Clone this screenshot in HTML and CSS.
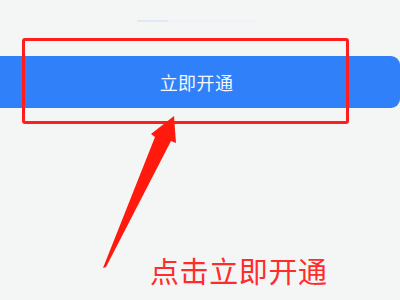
FILE: index.html
```html
<!DOCTYPE html>
<html lang="zh-CN">
<head>
    <meta charset="UTF-8">
    <meta name="viewport" content="width=device-width, initial-scale=1.0">
    <title>立即开通</title>
    <link rel="stylesheet" href="styles.css">
</head>
<body>
    <main class="page">
        <div class="track">
            <div class="track-fill"></div>
        </div>
        <button class="open-btn">立即开通</button>
        <p class="caption">点击立即开通</p>

        <!-- screenshot annotation -->
        <div class="mark-box"></div>
        <svg class="mark-arrow" width="400" height="300" viewBox="0 0 400 300">
            <polygon points="103,268 155,137 151,134 174,116 176,143 171,141 106,267" fill="#ff1a0d"/>
        </svg>
    </main>
</body>
</html>
```

FILE: styles.css
```css
body {
    margin: 0;
    background-color: #f4f5f5;
    font-family: "Noto Sans CJK SC", "Noto Sans", sans-serif;
}
.page {
    position: relative;
    width: 400px;
    height: 300px;
    overflow: hidden;
}
.track {
    display: flex;
    width: 120px;
    height: 2px;
    margin: 20px 0 0 137px;
    background: #eef2f9;
}
.track-fill {
    width: 31px;
    background: #dee8f6;
}
.open-btn {
    display: block;
    width: 410px;
    height: 52px;
    margin: 34px 0 0 -10px;
    padding: 0 0 0 3px;
    border: none;
    border-radius: 9px;
    background-color: #2f80f9;
    color: #f4f8ff;
    font-family: inherit;
    font-size: 18px;
    letter-spacing: 0.4px;
}
.caption {
    margin: 148px 0 0 150px;
    font-size: 29px;
    line-height: 1;
    letter-spacing: 0.6px;
    color: #ff2c2c;
}
.mark-box {
    position: absolute;
    left: 22px;
    top: 38px;
    width: 321px;
    height: 80px;
    border: 3px solid #ff1d1d;
    border-radius: 3px;
}
.mark-arrow {
    position: absolute;
    left: 0;
    top: 0;
}
```
